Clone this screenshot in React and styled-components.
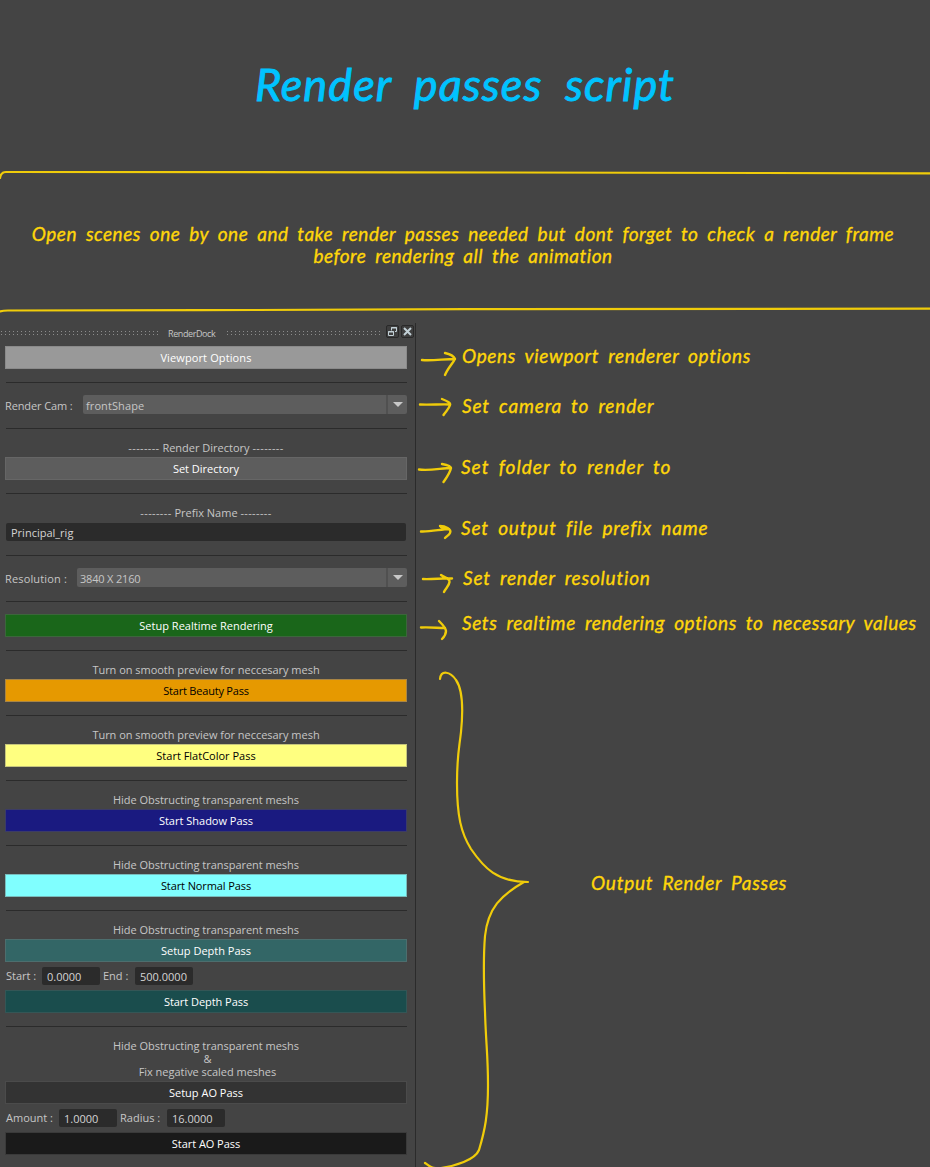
import React from "react";
import styled, { createGlobalStyle } from "styled-components";

const GlobalStyle = createGlobalStyle`
  * { box-sizing: border-box; }
  body { margin: 0; background: #444444; }
`;

const Page = styled.div`
  width: 930px;
  height: 1167px;
  overflow: hidden;
  display: flex;
  flex-direction: column;
  background: #444444;
`;

const Handwritten = styled.span`
  font-family: Lato, "Open Sans", sans-serif;
  font-style: italic;
  font-weight: 400;
  font-size: 19px;
  line-height: 22px;
  white-space: nowrap;
  color: #ffd60a;
  -webkit-text-stroke: 0.35px currentColor;
  letter-spacing: ${(p) => p.$track || 0.5}px;
  word-spacing: 4px;
`;

const Header = styled.header`
  height: 170px;
  display: flex;
  justify-content: center;
  padding-top: 57px;
`;

const Title = styled(Handwritten).attrs({ as: "h1" })`
  margin: 0;
  font-size: 45px;
  line-height: 54px;
  color: #00c3ff;
  -webkit-text-stroke: 0.9px currentColor;
  letter-spacing: 1.05px;
  word-spacing: 11px;
`;

const Banner = styled.section`
  height: 144px;
  display: flex;
  flex-direction: column;
  justify-content: space-between;
`;

const BannerText = styled.div`
  display: flex;
  flex-direction: column;
  align-items: center;
  padding: 5px 4px 0 0;
`;

const Stroke = styled.svg`
  display: block;
  flex: none;
  overflow: visible;
  fill: none;
  stroke: #f0cc0a;
  stroke-width: ${(p) => p.$weight || 2.2};
  stroke-linecap: round;
  stroke-linejoin: round;
`;

const Body = styled.main`
  flex: 1;
  display: flex;
  padding-top: 9px;
`;

const Dock = styled.aside`
  width: 416px;
  flex: none;
  padding: 0 8px 0 5px;
  border-right: 1px solid #2b2b2b;
  display: flex;
  flex-direction: column;
  font-family: "Open Sans", "Noto Sans", sans-serif;
  font-size: 11px;
  color: #c6c6c6;
`;

const TitleBar = styled.div`
  height: 23px;
  margin: 0 -8px 0 -5px;
  padding: 2px 2px 0 1px;
  display: flex;
  align-items: flex-start;
  font-size: 9px;
`;

const Grip = styled.div`
  width: ${(p) => p.$w}px;
  flex: none;
  height: 5px;
  margin-top: 6px;
  background: radial-gradient(circle at 0.5px 0.5px, #8c8c8c 0.6px, transparent 0.8px) 0 0 / 4px 3px;
`;

const DockName = styled.span`
  width: 68px;
  flex: none;
  padding-left: 9px;
  line-height: 17px;
  letter-spacing: -0.4px;
`;

const DockIcon = styled.svg`
  display: block;
  flex: none;
  width: 13px;
  height: 13px;
  margin: 0 0 0 ${(p) => p.$gap}px;
  background: #3e3e3e;
  border: 1px solid #292929;
  border-radius: 2px;
`;

const Button = styled.button`
  height: 23px;
  flex: none;
  width: 402px;
  margin: 0;
  padding: 0;
  border: 1px solid ${(p) => p.$edge || "#666666"};
  background: ${(p) => p.$bg || "#5d5d5d"};
  color: ${(p) => (p.$dark ? "#000000" : "#ffffff")};
  font: inherit;
  line-height: 21px;
  letter-spacing: ${(p) => p.$track || 0}px;
`;

const Rule = styled.hr`
  width: 401px;
  height: 1px;
  flex: none;
  margin: 13px 0 12px 1px;
  border: 0;
  background: #2b2b2b;
`;

const Caption = styled.div`
  width: 402px;
  margin-bottom: 3px;
  text-align: center;
  line-height: 13px;
  letter-spacing: ${(p) => p.$track || 0}px;
`;

const Dashes = styled.span`
  letter-spacing: 0.36px;
`;

const Row = styled.div`
  height: 20px;
  flex: none;
  width: 402px;
  display: flex;
  align-items: flex-start;
  line-height: 20px;
`;

const RowLabel = styled.label`
  width: ${(p) => p.$w}px;
  padding-left: ${(p) => p.$inset || 0}px;
  flex: none;
  line-height: 22px;
  white-space: nowrap;
  letter-spacing: ${(p) => p.$track || 0}px;
`;

const Select = styled.div`
  flex: 1;
  height: 19px;
  display: flex;
  justify-content: space-between;
  padding-left: 3px;
  border-radius: 2px;
  background: #5d5d5d;
  line-height: 22px;
  letter-spacing: ${(p) => p.$track || 0}px;
`;

const Chevron = styled.span`
  width: 21px;
  height: 19px;
  display: flex;
  justify-content: center;
  align-items: center;
  border-left: 2px solid #505050;
  &::before {
    content: "";
    border: 5px solid transparent;
    border-top-color: #c8c8c8;
    border-bottom: 0;
  }
`;

const Field = styled.div`
  width: ${(p) => p.$w}px;
  height: 18px;
  flex: none;
  margin: 1px 0 1px 1px;
  padding-left: 5px;
  border-radius: 2px;
  background: #2b2b2b;
  color: #d4d4d4;
  line-height: 20px;
`;

const SpinRow = styled.div`
  height: 28px;
  flex: none;
  display: flex;
  align-items: center;
  padding-left: 1px;
`;

const Notes = styled.section`
  flex: 1;
  padding-left: 2px;
  display: flex;
  flex-direction: column;
`;

const Note = styled.div`
  height: 36px;
  flex: none;
  margin-top: ${(p) => p.$gap}px;
  display: flex;
  align-items: flex-start;
  gap: ${(p) => p.$indent}px;
  ${Handwritten} { line-height: 34px; }
`;

const Group = styled.div`
  flex: 1;
  display: flex;
  align-items: flex-start;
`;

const GroupText = styled.div`
  margin: 230px 0 0 61px;
`;

const notes = [
  { gap: 16, indent: 4, text: "Opens viewport renderer options", track: 0.63, d: "M4 21 C14 22 26 20 37 20 M27 14 C31 15 36 17 37 20 C35 24 30 29 27 36" },
  { gap: 14, indent: 4, text: "Set camera to render", track: 0.82, d: "M2 15.5 C12 16 24 15 32 15.5 M24 10 C29 12 33 14 32 16 C31 20 28 22 25.5 26" },
  { gap: 25, indent: 3, text: "Set folder to render to", track: 1, d: "M1 19.5 C12 21 24 18 33 18 M24 14 C29 15 33 16 33 18 C32 23 29 27 25.5 32" },
  { gap: 25, indent: 3, text: "Set output file prefix name", track: 0.84, d: "M3 20.5 C12 21 24 18 31 18 M22 15 C27 15 34 18 32 22 C31 24 29 25 27 27 M23 16 L30 18" },
  { gap: 14, indent: 5, text: "Set render resolution", track: 0.8, d: "M5 18 C14 18.5 25 17 34 17.5 M23 14 C27 17 32 17 31.5 21 C31 25 28 27 26 31" },
  { gap: 9, indent: 4, text: "Sets realtime rendering options to necessary values", track: 0.62, d: "M3 21.5 C12 21 20 22 27 22 M21 15 C24 18 28 22 28 25 C28 29 26 31 24 33" },
];

const passes = [
  { caption: "Turn on smooth preview for neccesary mesh", label: "Start Beauty Pass", bg: "#e69900", edge: "#a98545", dark: true, track: -0.2 },
  { caption: "Turn on smooth preview for neccesary mesh", label: "Start FlatColor Pass", bg: "#ffff80", edge: "#c4c47c", dark: true },
  { caption: "Hide Obstructing transparent meshs", label: "Start Shadow Pass", bg: "#1a1a80", edge: "#3c3c66" },
  { caption: "Hide Obstructing transparent meshs", label: "Start Normal Pass", bg: "#80ffff", edge: "#78bcbc", dark: true, track: -0.1 },
];

export default function App() {
  return (
    <>
      <GlobalStyle />
      <Page>
        <Header>
          <Title>Render passes script</Title>
        </Header>
        <Banner>
          <Stroke width="930" height="6">
            <path d="M0 8 Q1 2 6 2 L400 2.3 L930 3.3" />
          </Stroke>
          <BannerText>
            <Handwritten>Open scenes one by one and take render passes needed but dont forget to check a render frame</Handwritten>
            <Handwritten>before rendering all the animation</Handwritten>
          </BannerText>
          <Stroke width="930" height="6">
            <path d="M0 3.5 Q3 2.5 8 2.5 L200 2.2 L465 1.2 L930 0.7" />
          </Stroke>
        </Banner>
        <Body>
          <Dock>
            <TitleBar>
              <Grip $w={158} />
              <DockName>RenderDock</DockName>
              <Grip $w={155} />
              <DockIcon $gap={4} viewBox="0 0 11 11" fill="none" stroke="#c2d0d6" strokeWidth="1">
                <path d="M4.5 4.5V1.5h5v4H8M4 2h6M1.5 5.5h5v4h-5zM1 6h6" />
              </DockIcon>
              <DockIcon $gap={2} viewBox="0 0 11 11" fill="none" stroke="#c2d0d6" strokeWidth="2">
                <path d="M2 2l7 7M9 2l-7 7" />
              </DockIcon>
            </TitleBar>
            <Button $bg="#999999" $edge="#8a8a8a" $track={0.12}>Viewport Options</Button>
            <Rule />
            <Row>
              <RowLabel $w={78} $track={-0.12}>Render Cam :</RowLabel>
              <Select $track={0.1}>frontShape<Chevron /></Select>
            </Row>
            <Rule />
            <Caption><Dashes>--------</Dashes> Render Directory <Dashes>--------</Dashes></Caption>
            <Button>Set Directory</Button>
            <Rule />
            <Caption><Dashes>--------</Dashes> Prefix Name <Dashes>--------</Dashes></Caption>
            <Field $w={400}>Principal_rig</Field>
            <Rule />
            <Row>
              <RowLabel $w={72} $track={0.15}>Resolution :</RowLabel>
              <Select $track={-0.18}>3840 X 2160<Chevron /></Select>
            </Row>
            <Rule />
            <Button $bg="#1a661a" $edge="#3c663c" $track={0.03}>Setup Realtime Rendering</Button>
            {passes.map((pass) => (
              <React.Fragment key={pass.label}>
                <Rule />
                <Caption $track={-0.03}>{pass.caption}</Caption>
                <Button $bg={pass.bg} $edge={pass.edge} $dark={pass.dark} $track={pass.track}>{pass.label}</Button>
              </React.Fragment>
            ))}
            <Rule />
            <Caption $track={-0.03}>Hide Obstructing transparent meshs</Caption>
            <Button $bg="#336666" $edge="#4d6e6e">Setup Depth Pass</Button>
            <SpinRow>
              <RowLabel $w={35}>Start :</RowLabel>
              <Field $w={58}>0.0000</Field>
              <RowLabel $w={34} $inset={3}>End :</RowLabel>
              <Field $w={58}>500.0000</Field>
            </SpinRow>
            <Button $bg="#1a4d4d" $edge="#345656" $track={-0.05}>Start Depth Pass</Button>
            <Rule />
            <Caption $track={-0.03}>
              Hide Obstructing transparent meshs
              <br />
              &nbsp;&amp;
              <br />
              &nbsp;Fix negative scaled meshes
            </Caption>
            <Button $bg="#333333" $edge="#4b4b4b">Setup AO Pass</Button>
            <SpinRow>
              <RowLabel $w={52}>Amount :</RowLabel>
              <Field $w={58}>1.0000</Field>
              <RowLabel $w={49} $inset={3}>Radius :</RowLabel>
              <Field $w={58}>16.0000</Field>
            </SpinRow>
            <Button $bg="#1a1a1a" $edge="#3a3a3a" $track={-0.05}>Start AO Pass</Button>
          </Dock>
          <Notes>
            {notes.map((n) => (
              <Note key={n.text} $gap={n.gap} $indent={n.indent}>
                <Stroke width="40" height="36" $weight={2.4}>
                  <path d={n.d} />
                </Stroke>
                <Handwritten $track={n.track}>{n.text}</Handwritten>
              </Note>
            ))}
            <Group>
              <Stroke width="112" height="525" viewBox="418 642 112 525">
                <path d="M440 679 C441 670 450 671 456 680 C463 690 463 712 461 732 C459 750 457 755 457 783 C457 816 461 833 471 849 C484 868 497 882 528 882 M524 882 C501 895 488 908 485 936 C483 960 484 990 485 1012 C486 1045 488 1055 488 1085 C488 1115 485 1130 479 1150 C475 1160 455 1166 441 1168 C432 1169 429 1166 425 1163" />
              </Stroke>
              <GroupText>
                <Handwritten $track={0.75}>Output Render Passes</Handwritten>
              </GroupText>
            </Group>
          </Notes>
        </Body>
      </Page>
    </>
  );
}
